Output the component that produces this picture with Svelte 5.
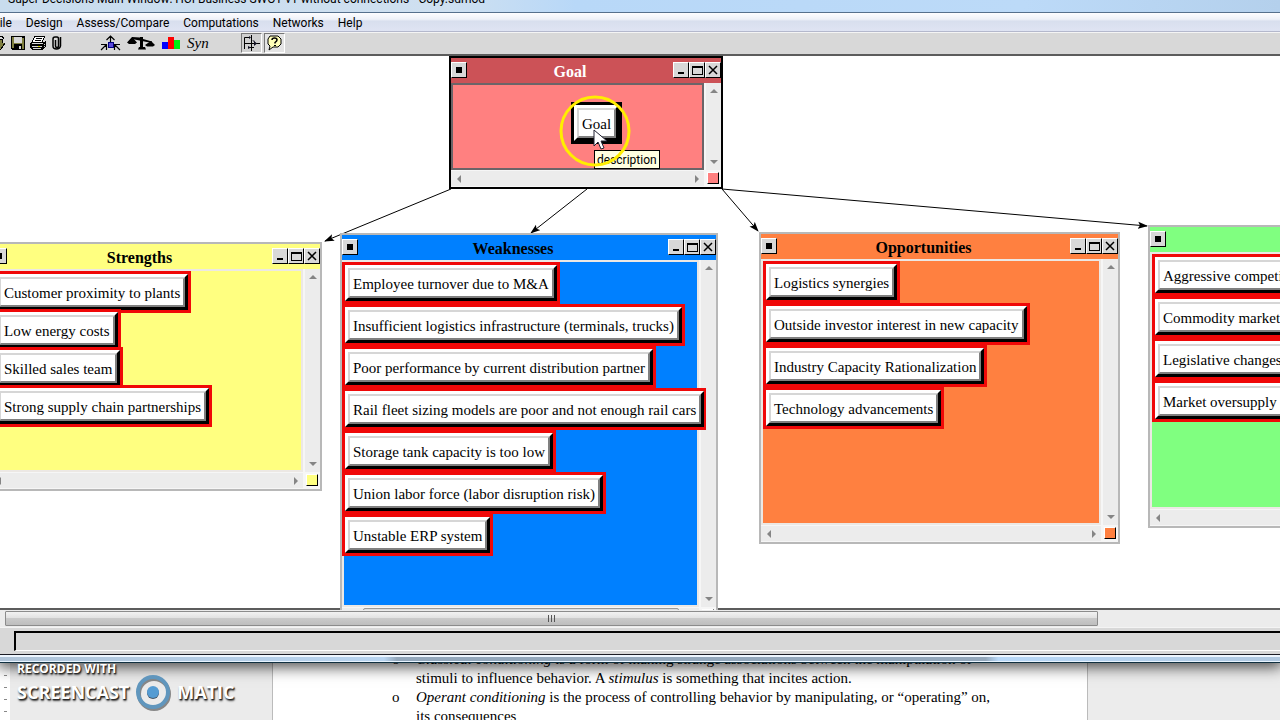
<script>
  const menus = ['File', 'Design', 'Assess/Compare', 'Computations', 'Networks', 'Help'];

  const clusters = [
    {
      id: 'strengths', title: 'Strengths', x: -11, y: 186, w: 333, h: 249, color: '#ffff80', tight: true,
      nodes: ['Customer proximity to plants', 'Low energy costs', 'Skilled sales team', 'Strong supply chain partnerships']
    },
    {
      id: 'weaknesses', title: 'Weaknesses', x: 340, y: 177, w: 378, h: 393, color: '#0080ff', wide: true,
      nodes: [
        'Employee turnover due to M&A',
        'Insufficient logistics infrastructure (terminals, trucks)',
        'Poor performance by current distribution partner',
        'Rail fleet sizing models are poor and not enough rail cars',
        'Storage tank capacity is too low',
        'Union labor force (labor disruption risk)',
        'Unstable ERP system'
      ]
    },
    {
      id: 'opportunities', title: 'Opportunities', x: 759, y: 176, w: 361, h: 312, color: '#ff8040',
      nodes: ['Logistics synergies', 'Outside investor interest in new capacity', 'Industry Capacity Rationalization', 'Technology advancements']
    },
    {
      id: 'threats', title: '', x: 1148, y: 169, w: 380, h: 303, color: '#80ff80', long: true,
      nodes: ['Aggressive competition', 'Commodity market', 'Legislative changes', 'Market oversupply']
    },
    {
      id: 'goal', title: 'Goal', x: 449, y: 0, w: 274, h: 133, color: '#ff8080', goal: true, nodes: ['Goal']
    }
  ];

  const links = [
    [451, 133, 325, 185],
    [587, 133, 531, 177],
    [722, 133, 758, 175],
    [722, 133, 1147, 170]
  ];
</script>

<div class="desktop">
  <section class="window">
    <header class="titlebar"><span>Super Decisions Main Window: HCI Business SWOT v1 without connections - Copy.sdmod</span></header>

    <nav class="menubar">
      {#each menus as m}<button>{m}</button>{/each}
    </nav>

    <div class="toolbar">
      <div class="group files">
        <button aria-label="Open">
          <svg width="12" height="16" shape-rendering="crispEdges"><path d="M0 5h8v3h3l-4 6H0z" fill="#808040" /><path d="M0 4h8v4M11 8l-4 6H0M4 1h4l2 3" fill="none" stroke="#000" /></svg>
        </button>
        <button aria-label="Save">
          <svg width="14" height="14" shape-rendering="crispEdges"><path d="M0 0h14v14H1L0 13z" fill="#000" /><path d="M1 1h2v11H1zM11 2h2v11h-2zM3 7h8v1H3z" fill="#808040" /><path d="M3 1h8v6H3zM8 10h2v3H8z" fill="#d8d8d8" /></svg>
        </button>
        <button aria-label="Print">
          <svg width="17" height="15" shape-rendering="crispEdges"><path d="M5 0h10l-3 6H2z" fill="#fff" stroke="#000" /><path d="M6 2h6M5 4h6" stroke="#000" /><path d="M1 6h13l2-2v6l-3 4H2l-2-2V7z" fill="#000" /><path d="M2 7h11v1H2zM2 10h10v1H2zM3 12h8v1H3z" fill="#d8d8d8" /><path d="M8 10h2v1H8z" fill="#dd0" /><path d="M14 8h1M14 10h1" stroke="#ccc" /></svg>
        </button>
        <button aria-label="Attach">
          <svg width="10" height="14"><path d="M3.500 4v6q0 1.500 1.500 1.500T6.500 10V3Q6.500 1 5 1H3Q1 1 1 3v7q0 3 3.500 3T8.500 10V1" fill="none" stroke="#000" stroke-width="1.500" /></svg>
        </button>
      </div>
      <div class="group">
        <button aria-label="Network view">
          <svg width="20" height="16"><path d="M8 7h5v5H8z" fill="#5a48d8" stroke="#000080" shape-rendering="crispEdges" /><path d="M10.500 7V1.500M6.500 5l4-4 4 4M1 15l5-5M1 9.500h5.500V15M20 15L15 10M20 9.500h-5.500V15" fill="none" stroke="#000" stroke-width="1.200" /></svg>
        </button>
        <button aria-label="Compare">
          <svg width="28" height="14"><path d="M5 1L13 1.500 16 3 25 5.500V7L15 5 5 3z" /><path d="M0 6.500L5 1l5 5.500L8 8H2zM18 9l6-4 4 4-2 1.500h-6zM13 1h3v10h2l1 2.500h-8l1-2.500h1z" /></svg>
        </button>
        <button aria-label="Priorities">
          <svg width="18" height="12" shape-rendering="crispEdges"><path d="M0 5h6v7H0z" fill="#00f" /><path d="M6 0h6v12H6z" fill="#f00" /><path d="M12 3h6v9h-6z" fill="#0e1" /></svg>
        </button>
        <button class="syn">Syn</button>
      </div>
      <div class="toggles">
        <button class="pressed" aria-label="Show connections" aria-pressed="true">
          <svg width="17" height="16"><path d="M1.500 14V2.500H7M8.500 0v16M1 8.500h16M5 12.500h6" fill="none" stroke="#000" /><path d="M11 6l3 2.500-3 2.500zM6 1l2 1.500L6 4zM9 5l3 1-1 1zM5 11l3 1.500L5 14z" fill="#112" /></svg>
        </button>
        <button class="pressed" aria-label="Show descriptions" aria-pressed="true">
          <svg width="17" height="16"><path d="M4 1h8l3 3v5l-3 3H7l-4 3 1-4-2-2V4z" fill="#ffffb8" stroke="#000" /><path d="M6 5q0-2 2.500-2T11 5q0 1-2 2.500V8.500" fill="none" stroke="#000" stroke-width="1.500" /><path d="M8 10h2v1H8z" /></svg>
        </button>
      </div>
    </div>

    <main class="canvas">
      <svg class="links" aria-hidden="true">
        <defs>
          <marker id="head" markerWidth="10" markerHeight="8" refX="9" refY="4" orient="auto" markerUnits="userSpaceOnUse">
            <path d="M0 0.500L10 4 0 7.500 2 4z" />
          </marker>
        </defs>
        {#each links as [x1, y1, x2, y2]}
          <line {x1} {y1} {x2} {y2} stroke="#000" marker-end="url(#head)" />
        {/each}
      </svg>

      {#each clusters as c (c.id)}
        <section
          class="cluster"
          class:goal={c.goal}
          class:tight={c.tight}
          class:wide={c.wide}
          class:long={c.long}
          style="left:{c.x}px;top:{c.y}px;width:{c.w}px;height:{c.h}px;--fill:{c.color}"
        >
          <header>
            <button class="box" aria-label="Cluster menu"><svg width="6" height="6"><path d="M0 0h6v6H0z" /></svg></button>
            <h2>{c.title}</h2>
            <button class="box" aria-label="Minimize"><svg width="10" height="10"><path d="M2 7h6v2H2z" /></svg></button>
            <button class="box" aria-label="Maximize"><svg width="12" height="10" shape-rendering="crispEdges"><path d="M1 1h10v8H1zM1 2h10" fill="none" stroke="#000" /></svg></button>
            <button class="box" aria-label="Close"><svg width="10" height="10"><path d="M1 1l8 8M9 1L1 9" stroke="#000" stroke-width="1.500" /></svg></button>
          </header>
          <div class="frame">
            <div class="body">
              {#each c.nodes as n}
                <button class="node"><span><span>{n}</span></span></button>
              {/each}
            </div>
            <div class="vbar">
              <svg width="8" height="4"><path d="M0 4L4 0l4 4z" /></svg>
              <svg width="8" height="4"><path d="M0 0h8L4 4z" /></svg>
            </div>
            <div class="hbar">
              <svg width="4" height="8"><path d="M4 0v8L0 4z" /></svg>
              {#if c.wide}<i class="hthumb"></i>{/if}
              <svg width="4" height="8"><path d="M0 0v8l4-4z" /></svg>
            </div>
            <button class="sizer" aria-label="Resize"></button>
          </div>
        </section>
      {/each}

      <div class="tooltip" role="tooltip">description</div>
      <svg class="pointer" width="74" height="74" aria-hidden="true">
        <circle cx="37" cy="37" r="34" fill="none" stroke="#ffee00" stroke-width="3" />
        <path d="M36 36v16l4-4 3 7 3-1-3-7h6z" fill="#fff" stroke="#223" />
      </svg>
    </main>

    <div class="hscroll"><div class="thumb"><i></i><i></i><i></i></div><div class="track"></div></div>
    <footer class="status"><div></div></footer>
    <div class="edge"></div>
  </section>

  <section class="document">
    <div class="ruler"><i></i><i></i><i></i><i></i></div>
    <div class="margin">
      <div class="mark">
        <p>RECORDED WITH</p>
        <div class="brand">
          <span>SCREENCAST</span>
          <svg width="36" height="34" aria-hidden="true">
            <circle cx="19" cy="19" r="15" fill="none" stroke="#444" stroke-opacity=".6" stroke-width="4" />
            <circle cx="18" cy="17" r="15" fill="none" stroke="#6096bd" stroke-width="4" />
            <circle cx="18" cy="18" r="6" fill="#456" />
            <circle cx="18" cy="17" r="6" fill="#559cd3" />
          </svg>
          <span>MATIC</span>
        </div>
      </div>
    </div>
    <div class="page">
      <ul>
        <li><em>Classical conditioning</em> is a form of making strange associations between the manipulation of<br />stimuli to influence behavior. A <em>stimulus</em> is something that incites action.</li>
        <li><em>Operant conditioning</em> is the process of controlling behavior by manipulating, or “operating” on,<br />its consequences</li>
      </ul>
    </div>
    <div class="outside"></div>
  </section>
</div>

<style>
  :global(body) { margin: 0; background: #fff; }
  button { margin: 0; padding: 0; border: 0; background: none; font: inherit; color: inherit; }
  svg { display: block; flex: none; overflow: visible; }

  .desktop {
    display: flex; flex-direction: column; height: 100vh; overflow: hidden;
    font-family: "Liberation Serif", "Times New Roman", serif; font-size: 15px; color: #000;
  }
  .window { flex: 1; min-height: 0; display: flex; flex-direction: column; position: relative; z-index: 1; box-shadow: 0 2px 14px 2px rgba(0, 0, 0, .7); }

  .titlebar {
    height: 12px; flex: none; overflow: hidden; display: flex; align-items: flex-end;
    border-bottom: 1px solid #56708c; padding-left: 8px; white-space: nowrap;
    background: linear-gradient(90deg, #c8dcee, #cfe0f0 35%, #b8d8f8 45%, #bcdaf8 80%, #b4d0ec);
    font: 12px/16px Roboto, "Open Sans", sans-serif;
  }
  .titlebar span { padding-bottom: 5px; }

  .menubar {
    flex: none; display: flex; height: 18px; margin: 0; padding: 0; overflow: hidden;
    background: linear-gradient(#fdfdff, #eef1f8 35%, #d8dfee 45%, #dfe4f3);
    border-bottom: 1px solid #b4b8cc;
    font: 12px/20px Roboto, "Open Sans", sans-serif;
  }
  .menubar button { padding: 0 7px; }
  .menubar button:first-child { margin-left: -14px; }

  .toolbar {
    flex: none; display: flex; align-items: center; height: 20px; padding-bottom: 1px; border-top: 1px solid #f4f4f4;
    border-bottom: 2px solid #5c5c5c; background: #d8d8d8;
  }
  .group { display: flex; align-items: center; gap: 7px; }
  .files { gap: 5px; margin: 0 38px 0 -6px; }
  .syn { font: italic 15px/16px "Liberation Serif", serif; }
  .toggles { display: flex; gap: 2px; margin-left: 32px; }
  .pressed { padding: 1px; border: 1px solid; border-color: #777 #fff #fff #777; background: #d0d0d0; }
  .pressed + .pressed { background: #e4e4e4; }

  .canvas { flex: 1; min-height: 0; position: relative; overflow: hidden; background: linear-gradient(#5c5c5c, #5c5c5c) bottom / 100% 2px no-repeat #fff; }
  .links { position: absolute; inset: 0; width: 100%; height: 100%; }

  .cluster { position: absolute; box-sizing: border-box; display: flex; flex-direction: column; border: 2px solid #b8b8b8; background: #f6f6f6; }
  .cluster header { flex: none; display: flex; align-items: flex-start; height: 25px; padding-top: 4px; box-sizing: border-box; background: var(--fill); }
  .cluster h2 { flex: 1; margin: 0; text-align: center; font-size: 16px; line-height: 20px; }
  .box {
    box-sizing: border-box; width: 16px; height: 16px; display: flex; align-items: center; justify-content: center;
    background: #d8d8d8; border: 1px solid; border-color: #fff #000 #000 #fff;
  }
  .frame { flex: 1; min-height: 0; display: grid; grid-template: minmax(0, 1fr) 17px / minmax(0, 1fr) 17px; }
  .body {
    display: flex; flex-direction: column; align-items: flex-start; position: relative; z-index: 1;
    border: 2px solid #ece8e4; background: var(--fill); white-space: nowrap; overflow: clip; overflow-clip-margin: 9px;
  }
  .vbar, .hbar { display: flex; justify-content: space-between; align-items: center; background: #ececec; fill: #858585; }
  .vbar { flex-direction: column; margin-left: 2px; padding: 6px 0; }
  .hbar { margin: 1px 0; padding: 0 5px 0 6px; }
  .hthumb { align-self: stretch; width: 314px; border: 1px solid #999; border-radius: 2px; background: #ddd; }
  .sizer { width: 12px; height: 12px; margin: 2px 0 0 3px; background: var(--fill); border: 1px solid; border-color: #fff #000 #000 #fff; box-sizing: border-box; }

  .node { display: block; flex: none; border: 3px solid #f00808; }
  .node > span { display: block; border: 3px solid; border-color: #fff #000 #000 #fff; }
  .node > span > span { display: block; padding: 2px 3px 0; line-height: 24px; border: 2px solid; border-color: #d6d6d6 #808080 #808080 #d6d6d6; background: #fff; }
  .tight .node + .node { margin-top: -4px; }
  .wide .node { margin-left: -2px; }
  .long .node { min-width: 240px; text-align: left; }

  .goal { border-color: #000; }
  .goal header { background: #cc5257; }
  .goal h2 { color: #fff; }
  .goal .body { border-color: #6c6468; }
  .goal .node { margin: 17px 0 0 118px; border-color: #000; }

  .tooltip { position: absolute; z-index: 2; left: 594px; top: 94px; padding: 2px 2px 0; border: 1px solid #000; background: #ffffe1; font: 12px/15px Roboto, "Open Sans", sans-serif; }
  .pointer { position: absolute; z-index: 3; left: 558px; top: 38px; }

  .hscroll { flex: none; display: flex; height: 17px; background: #ececec; padding-left: 5px; box-sizing: border-box; }
  .thumb {
    flex: 6; box-sizing: border-box; display: flex; justify-content: center; align-items: center; gap: 2px; margin: 1px 0;
    border: 1px solid #8c8c8c; border-radius: 1px; background: linear-gradient(#f2f2f2, #e2e2e2 45%, #cacaca 50%, #bebebe);
  }
  .thumb i { width: 1px; height: 7px; background: #555; }
  .track { flex: 1; }
  .status { flex: none; height: 27px; box-sizing: border-box; padding: 3px 0 3px 14px; background: #d8d8d8; border-top: 1px solid #f4f4f4; }
  .status div { height: 100%; box-sizing: border-box; border: solid; border-width: 2px 0 1px 2px; border-color: #000 #fff #fff #000; }
  .edge {
    flex: none; height: 7px; border-top: 1px solid #1c1c24; border-bottom: 1px solid #103040;
    background: linear-gradient(90deg, #b0c4d8, #b8d4f0 30%, #93a7bb 31%, #93a7bb 77%, #b8d8f8 78%, #b0c8e0);
    box-shadow: inset 0 2px #eef6ff, inset 0 -1px #e8f4ff;
  }

  .document { flex: none; height: 57px; display: flex; overflow: hidden; background: #fff; }
  .ruler { width: 10px; flex: none; display: flex; flex-direction: column; align-items: center; gap: 11px; padding-top: 12px; }
  .ruler i { width: 3px; height: 1px; flex: none; background: #888; }
  .margin { flex: 262; min-width: 0; box-sizing: border-box; background: #ebebeb; border-right: 1px solid #bbb; }
  .page { flex: 814; min-width: 0; white-space: nowrap; }
  .outside { flex: 192; min-width: 0; border-left: 1px solid #bbb; background: #ececec; }
  .mark { padding-left: 7px; color: #fff; font-family: "Open Sans", sans-serif; font-weight: 700; text-shadow: 1px 1px 1px #222, 1px 2px 2px #444; position: relative; z-index: 2; }
  .mark p { margin: 0; font-size: 12px; line-height: 12px; }
  .brand { display: flex; align-items: center; gap: 6px; font-size: 18px; line-height: 32px; }
  .page ul { margin: -13px 0 0 143px; padding: 0; list-style: none; line-height: 19px; }
  .page li::before { content: "o"; float: left; margin-left: -24px; }
</style>
